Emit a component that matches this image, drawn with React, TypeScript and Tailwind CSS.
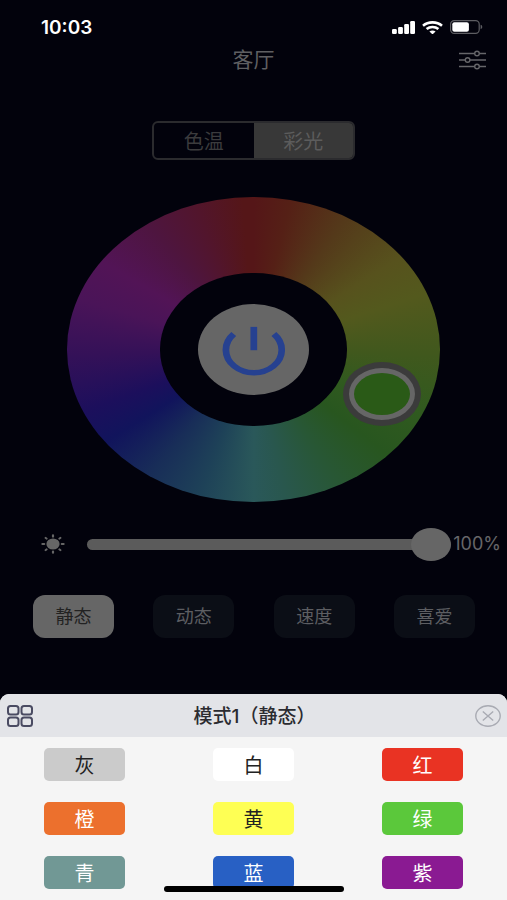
import React, { useState } from 'react'

const colorTabs = ['色温', '彩光']
const modes = ['静态', '动态', '速度', '喜爱']

const swatches = [
  { label: '灰', className: 'bg-[#cbcbcb] text-[#222222]' },
  { label: '白', className: 'bg-white text-[#222222]' },
  { label: '红', className: 'bg-[#e93323] text-white' },
  { label: '橙', className: 'bg-[#ec702d] text-white' },
  { label: '黄', className: 'bg-[#feff54] text-[#222222]' },
  { label: '绿', className: 'bg-[#5bc83b] text-white' },
  { label: '青', className: 'bg-[#719895] text-white' },
  { label: '蓝', className: 'bg-[#2860c4] text-white' },
  { label: '紫', className: 'bg-[#8a1a92] text-white' },
]

const wheelBg =
  'bg-[conic-gradient(#551618_0deg,#552016_14deg,#54391a_35deg,#57521d_58deg,#53591d_72deg,#40581d_92deg,#305a1f_110deg,#28561f_128deg,#285735_148deg,#29574e_168deg,#2a585a_180deg,#1e4258_200deg,#182d58_220deg,#11145c_238deg,#1c0f5c_250deg,#341158_268deg,#4a1458_286deg,#521456_300deg,#4e153f_320deg,#52152c_338deg,#551618_356deg)]'

function StatusBar() {
  return (
    <div className="flex h-11 items-end justify-between pr-6 pl-[41px] text-white">
      <span className="text-[19px] leading-[33px] font-semibold">10:03</span>
      <div className="flex h-[34px] items-center gap-[7px]">
        <svg width="23" height="13" viewBox="0 0 23 13" fill="currentColor">
          <rect x="0" y="8" width="4.8" height="5" rx="1.3" />
          <rect x="6.1" y="6" width="4.8" height="7" rx="1.3" />
          <rect x="12.2" y="3" width="4.8" height="10" rx="1.3" />
          <rect x="18.2" y="0" width="4.8" height="13" rx="1.3" />
        </svg>
        <svg width="21" height="13" viewBox="0 0 21 13" fill="none" stroke="currentColor" strokeWidth="2.6">
          <path d="M1 4.7C6.2 .3 14.8 .3 20 4.7" />
          <path d="M4.6 8.1c3.4-2.9 8.4-2.9 11.8 0" />
          <path d="M7.4 10.6c1.7-1.5 4.5-1.5 6.2 0L10.5 13.4z" fill="currentColor" stroke="none" />
        </svg>
        <svg width="33" height="14" viewBox="0 0 33 14" fill="none">
          <rect x=".6" y=".6" width="28.6" height="12.8" rx="3.6" stroke="#5d5d62" strokeWidth="1.2" />
          <rect x="2.3" y="2.3" width="16.6" height="9.4" rx="2" fill="currentColor" />
          <path d="M30.6 4.8c2.2.6 2.2 3.8 0 4.4z" fill="#5d5d62" />
        </svg>
      </div>
    </div>
  )
}

function ColorWheel() {
  return (
    <div className={`relative mx-auto flex aspect-[372/305] w-[73.4%] items-center justify-center rounded-[50%] ${wheelBg}`}>
      <div className="flex h-1/2 w-1/2 items-center justify-center rounded-[50%] bg-[#02020c]">
        <button aria-label="开关" className="h-[60%] w-[60%] rounded-[50%] bg-[#666666]">
          <svg className="h-full w-full" viewBox="0 0 100 100" preserveAspectRatio="none" fill="none" stroke="#264190" strokeWidth="6">
            <path d="M32 32.8a25 25 0 1 0 36 0" />
            <path d="M50 25v25.5" />
          </svg>
        </button>
      </div>
      {/* Picker handle */}
      <button
        aria-label="选色"
        className="absolute top-[54%] left-[74%] h-[21%] w-[21%] rounded-[50%] border-6 border-[#3b3b3b] bg-[#666666] p-[5px]"
      >
        <span className="block h-full w-full rounded-[50%] bg-[#2a5a17]" />
      </button>
    </div>
  )
}

function SunIcon() {
  return (
    <svg className="h-5 w-6 shrink-0" viewBox="0 0 24 24" preserveAspectRatio="none" fill="#666666" stroke="#666666" strokeWidth="2.2" strokeLinecap="round">
      <circle cx="12" cy="12" r="6.6" stroke="none" />
      <path d="M12 1.4v1.8M12 20.8v1.8M1.4 12h1.8M20.8 12h1.8M4.6 4.6l1 1M18.4 18.4l1 1M19.4 4.6l-1 1M5.6 18.4l-1 1" />
    </svg>
  )
}

export default function App() {
  const [tab, setTab] = useState('彩光')
  const [mode, setMode] = useState('静态')
  const [brightness, setBrightness] = useState(100)

  return (
    <div className="relative flex min-h-screen flex-col overflow-hidden bg-[#02020c] font-[Inter,'Noto_Sans_CJK_SC',sans-serif]">
      <StatusBar />

      {/* Title bar */}
      <header className="grid h-8 grid-cols-3 items-center px-[21px]">
        <h1 className="col-start-2 text-center text-[21px] leading-8 text-[#5f5f62]">客厅</h1>
        <button aria-label="设置" className="justify-self-end text-[#66666a]">
          <svg width="27" height="20" viewBox="0 0 27 20" fill="none" stroke="currentColor" strokeWidth="1.4">
            <path d="M0 3.5h15.6M20.4 3.5H27M0 10h6.2M11 10h16M0 16.5h15.6M20.4 16.5H27" />
            <circle cx="18" cy="3.5" r="2.3" />
            <circle cx="8.6" cy="10" r="2.3" />
            <circle cx="18" cy="16.5" r="2.3" />
          </svg>
        </button>
      </header>

      <div className="mx-auto mt-[45px] flex w-[40%] overflow-hidden rounded-md border-2 border-[#2b2b2e]">
        {colorTabs.map((item) => (
          <button
            key={item}
            onClick={() => setTab(item)}
            className={`h-[35px] flex-1 pt-0.5 text-xl ${tab === item ? 'bg-[#383838] text-[#5c5c5c]' : 'text-[#3b3b3d]'}`}
          >
            {item}
          </button>
        ))}
      </div>

      <div className="mt-[37px]">
        <ColorWheel />
      </div>

      {/* Brightness */}
      <div className="mt-[25px] flex items-center pr-1.5 pl-[41px]">
        <SunIcon />
        <input
          type="range"
          aria-label="亮度"
          min={0}
          max={100}
          value={brightness}
          onChange={(e) => setBrightness(Number(e.target.value))}
          className="ml-[22px] h-[34px] min-w-0 flex-1 appearance-none bg-transparent [&::-webkit-slider-runnable-track]:h-[11px] [&::-webkit-slider-runnable-track]:rounded-full [&::-webkit-slider-runnable-track]:bg-[#5b5b5b] [&::-webkit-slider-thumb]:-mt-[11px] [&::-webkit-slider-thumb]:h-[33px] [&::-webkit-slider-thumb]:w-10 [&::-webkit-slider-thumb]:appearance-none [&::-webkit-slider-thumb]:rounded-[50%] [&::-webkit-slider-thumb]:bg-[#666666]"
        />
        <span className="ml-0.5 text-lg text-[#666669]">{brightness}%</span>
      </div>

      {/* Mode buttons */}
      <div className="mt-[34px] mb-14 flex justify-between pr-8 pl-[33px]">
        {modes.map((item) => (
          <button
            key={item}
            onClick={() => setMode(item)}
            className={`h-[43px] w-[81px] rounded-xl text-lg ${
              mode === item ? 'bg-[#666666] text-[#222222]' : 'bg-[#0b0e16] text-[#5d5e62]'
            }`}
          >
            {item}
          </button>
        ))}
      </div>

      {/* Bottom sheet */}
      <section className="mt-auto overflow-hidden rounded-t-[9px] bg-[#f5f5f5]">
        <div className="flex h-[43px] items-center justify-between bg-[#e3e4e8] px-1.5">
          <button aria-label="全部模式" className="text-[#4a4b62]">
            <svg className="h-[22px] w-7" viewBox="0 0 28 22" fill="none" stroke="currentColor" strokeWidth="2">
              <rect x="2" y="1" width="10.5" height="8.4" rx="2.5" />
              <rect x="15.5" y="1" width="10.5" height="8.4" rx="2.5" />
              <rect x="2" y="12.6" width="10.5" height="8.4" rx="2.5" />
              <rect x="15.5" y="12.6" width="10.5" height="8.4" rx="2.5" />
            </svg>
          </button>
          <h2 className="pt-1 text-[19px] font-medium text-[#2b2b30]">模式1（静态）</h2>
          <button aria-label="关闭" className="text-[#a9abb3]">
            <svg className="h-[22px] w-[26px]" viewBox="0 0 26 22" fill="none" stroke="currentColor" strokeWidth="1.4">
              <ellipse cx="13" cy="11" rx="12.2" ry="10.2" />
              <path d="M7.8 6.4l10.4 9.2M18.2 6.4L7.8 15.6" />
            </svg>
          </button>
        </div>
        <div className="grid grid-cols-3 justify-items-center gap-y-[21px] pt-[11px] pb-[11px]">
          {swatches.map((swatch) => (
            <button key={swatch.label} className={`h-[33px] w-[81px] rounded-[5px] pt-[3px] text-xl leading-[30px] ${swatch.className}`}>
              {swatch.label}
            </button>
          ))}
        </div>
      </section>

      {/* Home indicator */}
      <div className="absolute bottom-2 left-1/2 h-[6px] w-[180px] -translate-x-1/2 rounded-full bg-black" />
    </div>
  )
}
